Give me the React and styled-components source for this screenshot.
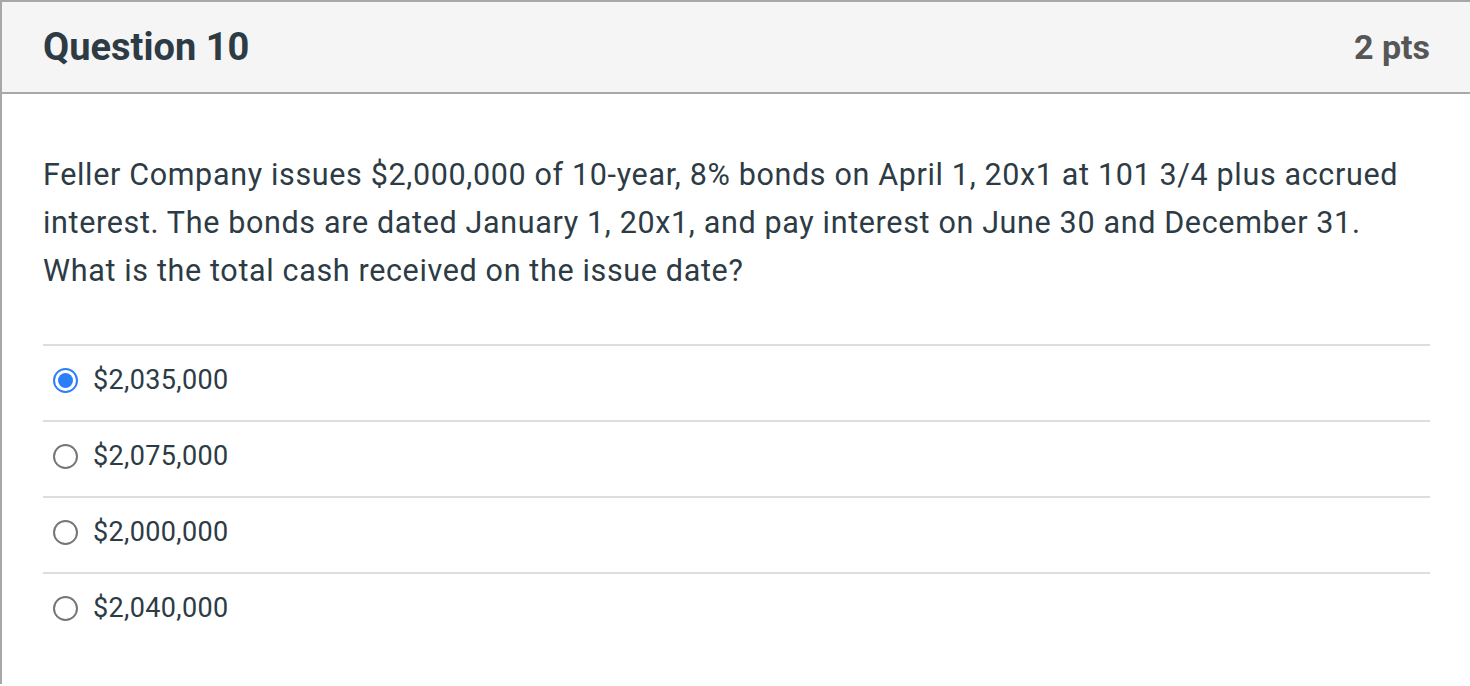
import React from "react";
import styled, { createGlobalStyle } from "styled-components";

const Global = createGlobalStyle`
  html, body { margin: 0; padding: 0; background: #fff; }
  body { font-family: Roboto, "Liberation Sans", Arial, sans-serif; }
`;

const Card = styled.div`
  border-top: 2px solid #a8a8a8;
  border-left: 2px solid #a8a8a8;
  min-height: 684px;
  box-sizing: border-box;
`;

const Header = styled.div`
  display: flex;
  align-items: center;
  justify-content: space-between;
  height: 90px;
  padding: 0 40px 0 41px;
  background: #f5f5f5;
  border-bottom: 2px solid #a8a8a8;
`;

const Title = styled.div`
  font-size: 38px;
  font-weight: 700;
  color: #2d3b45;
`;

const Points = styled.div`
  font-size: 34px;
  font-weight: 700;
  color: #565656;
`;

const Body = styled.div`
  padding: 57px 40px 0 41px;
`;

const QuestionText = styled.p`
  margin: 0 0 49px;
  font-size: 30.5px;
  letter-spacing: 0.65px;
  line-height: 48px;
  color: #2d3b45;
`;

const Answers = styled.div`
  display: flex;
  flex-direction: column;
`;

const Answer = styled.label`
  display: flex;
  align-items: center;
  gap: 15px;
  height: 76px;
  box-sizing: border-box;
  padding: 0 0 6px 10px;
  border-top: 2px solid #dddddd;
  font-size: 27px;
  letter-spacing: 0.35px;
  color: #2d3b45;
  cursor: pointer;
`;

const Radio = styled.span`
  box-sizing: border-box;
  width: 25px;
  height: 25px;
  border-radius: 50%;
  border: 2px solid ${(p) => (p.$checked ? "#2d7ff9" : "#767676")};
  display: flex;
  align-items: center;
  justify-content: center;
  flex: none;

  &::after {
    content: "";
    display: ${(p) => (p.$checked ? "block" : "none")};
    width: 15px;
    height: 15px;
    border-radius: 50%;
    background: #2d7ff9;
  }
`;

const answers = [
  { label: "$2,035,000", checked: true },
  { label: "$2,075,000" },
  { label: "$2,000,000" },
  { label: "$2,040,000" },
];

export default function App() {
  return (
    <>
      <Global />
      <Card>
        <Header>
          <Title>Question 10</Title>
          <Points>2 pts</Points>
        </Header>
        <Body>
          <QuestionText>
            Feller Company issues $2,000,000 of 10-year, 8% bonds on April 1, 20x1 at 101 3/4 plus accrued
            interest. The bonds are dated January 1, 20x1, and pay interest on June 30 and December 31.
            What is the total cash received on the issue date?
          </QuestionText>
          <Answers>
            {answers.map((a) => (
              <Answer key={a.label}>
                <Radio $checked={!!a.checked} />
                {a.label}
              </Answer>
            ))}
          </Answers>
        </Body>
      </Card>
    </>
  );
}
